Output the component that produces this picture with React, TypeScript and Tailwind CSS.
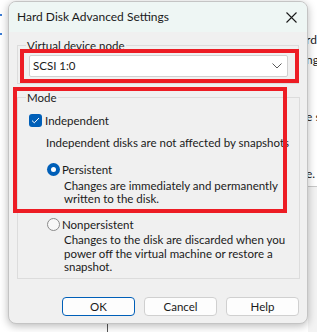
import React from "react";

function Chevron() {
  return (
    <svg width="10" height="6" viewBox="0 0 10 6" fill="none">
      <path d="M0.5 0.5 L5 5 L9.5 0.5" stroke="#5a5a5a" strokeWidth="1" />
    </svg>
  );
}

function CloseX() {
  return (
    <svg width="11" height="11" viewBox="0 0 11 11" fill="none">
      <path d="M0.5 0.5 L10.5 10.5 M10.5 0.5 L0.5 10.5" stroke="#1a1a1a" strokeWidth="1.1" />
    </svg>
  );
}

function Checkbox() {
  return (
    <div className="w-[13px] h-[13px] rounded-[3px] bg-[#005fb8] flex items-center justify-center shrink-0">
      <svg width="9" height="7" viewBox="0 0 9 7" fill="none">
        <path d="M1 3.6 L3.3 5.8 L8 1" stroke="#ffffff" strokeWidth="1" />
      </svg>
    </div>
  );
}

function RadioOn() {
  return (
    <div className="w-[13px] h-[13px] rounded-full bg-[#005fb8] flex items-center justify-center shrink-0">
      <div className="w-[5px] h-[5px] rounded-full bg-white" />
    </div>
  );
}

function RadioOff() {
  return <div className="w-[13px] h-[13px] rounded-full border border-[#8a8a8a] bg-[#f7f7f7] shrink-0" />;
}

export default function App() {
  return (
    <div className="relative w-[317px] h-[332px] overflow-hidden bg-white text-[#1a1a1a] text-[11.5px] leading-[13.5px] font-['Lato',sans-serif]">
      {/* underlying window fragments */}
      <div className="absolute left-0 top-[14px] w-[2px] h-[2px] bg-[#3a7bd5]" />
      <div className="absolute left-0 top-[33px] w-[2px] h-[2px] bg-[#3a7bd5]" />
      <div className="absolute left-[308px] top-[186px] w-[9px] h-[146px] bg-[#f3f3f3] border-t border-[#c8c8c8]" />
      <div className="absolute left-[308px] top-[30px] w-[9px] h-[150px] overflow-hidden">
        <div className="absolute left-[-2px] top-[3px] text-[12px] leading-[14px] whitespace-nowrap">rd</div>
        <div className="absolute left-[-2px] top-[23px] text-[12px] leading-[14px] whitespace-nowrap">ng</div>
        <div className="absolute left-[-2px] top-[80px] text-[12px] leading-[14px] whitespace-nowrap">e s</div>
        <div className="absolute left-[-2px] top-[137px] text-[12px] leading-[14px] whitespace-nowrap">e.</div>
      </div>
      <div className="absolute left-[107px] top-[322px] w-[1px] h-[10px] bg-[#555]" />

      {/* dialog */}
      <div className="absolute left-[8px] top-[1px] w-[300px] h-[323px] rounded-[8px] border border-[#c4c4c4] bg-[#f0f0f0] overflow-hidden shadow-[0_2px_8px_rgba(0,0,0,0.28)] flex flex-col">
        <div className="h-[30px] bg-[#eef6f4] flex items-center justify-between pl-[8px] pr-[10px] shrink-0">
          <span className="text-[12px] leading-[14px]">Hard Disk Advanced Settings</span>
          <CloseX />
        </div>
        <div className="flex flex-col pl-[8px] pr-[8px] pt-[7px]">
          <fieldset className="border border-[#dcdcdc] w-[282px] h-[45px] pl-[11px] pr-[10px]">
            <legend className="px-[1px] ml-[-3px] leading-[13px]">Virtual device node</legend>
            <div className="mt-[3px] h-[22px] w-[259px] bg-white border border-[#d0d0d0] rounded-[2px] flex items-center justify-between pl-[3px] pr-[5px]">
              <span>SCSI 1:0</span>
              <Chevron />
            </div>
          </fieldset>
          <fieldset className="mt-[7px] border border-[#dcdcdc] w-[283px] h-[188px] pl-[11px]">
            <legend className="px-[1px] ml-[-3px] leading-[13px]">Mode</legend>
            <div className="flex items-center gap-[3px] mt-[10px]">
              <Checkbox />
              <span>Independent</span>
            </div>
            <div className="pl-[17px] mt-[8px] whitespace-nowrap">Independent disks are not affected by snapshots</div>
            <div className="pl-[18px] mt-[14px] flex items-center gap-[2px]">
              <RadioOn />
              <span>Persistent</span>
            </div>
            <div className="pl-[35px] mt-[2px] whitespace-nowrap">
              <div>Changes are immediately and permanently</div>
              <div>written to the disk.</div>
            </div>
            <div className="pl-[18px] mt-[12px] flex items-center gap-[2px]">
              <RadioOff />
              <span>Nonpersistent</span>
            </div>
            <div className="pl-[35px] mt-[2px] whitespace-nowrap">
              <div>Changes to the disk are discarded when you</div>
              <div>power off the virtual machine or restore a</div>
              <div>snapshot.</div>
            </div>
          </fieldset>
          <div className="flex justify-end gap-[9px] mt-[18px]">
            <button className="w-[73px] h-[19px] rounded-[4px] border border-[#005fb8] bg-[#fdfdfd] leading-[13px]">OK</button>
            <button className="w-[73px] h-[19px] rounded-[4px] border border-[#d0d0d0] bg-[#fdfdfd] leading-[13px]">Cancel</button>
            <button className="w-[73px] h-[19px] rounded-[4px] border border-[#d0d0d0] bg-[#fdfdfd] leading-[13px]">Help</button>
          </div>
        </div>
      </div>

      {/* red annotation boxes */}
      <div className="absolute left-[20px] top-[49px] w-[279px] h-[34px] border-[4px] border-[#ed1c24]" />
      <div className="absolute left-[13px] top-[87px] w-[274px] h-[126px] border-[4px] border-[#ed1c24]" />
    </div>
  );
}
